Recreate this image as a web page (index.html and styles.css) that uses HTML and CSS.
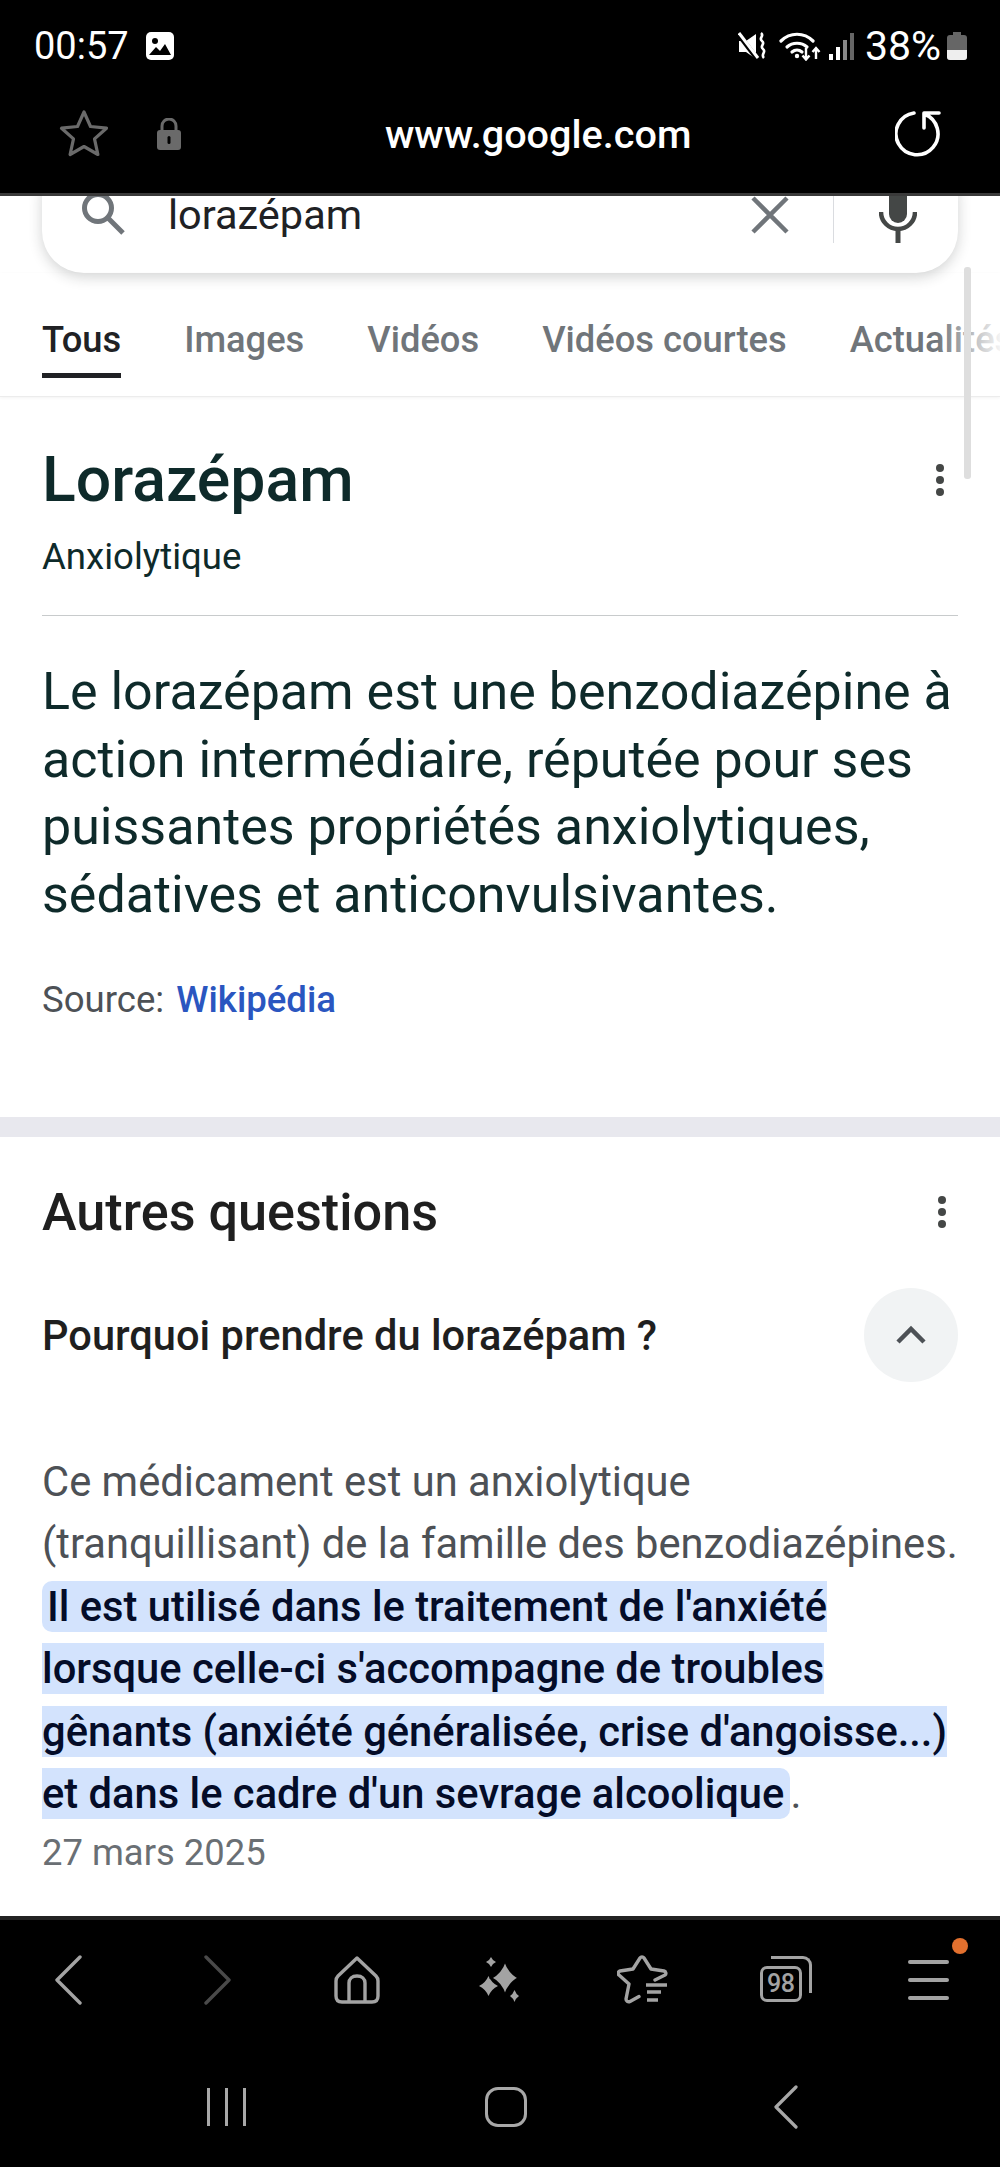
FILE: index.html
```html
<!DOCTYPE html>
<html lang="fr">
<head>
  <meta charset="UTF-8" />
  <meta name="viewport" content="width=device-width, initial-scale=1.0"/>
  <title>lorazépam - Recherche Google</title>
  <link rel="stylesheet" href="styles.css">
</head>
<body>

  <header class="top-bar">
    <div class="status-row">
      <span class="clock">00:57</span>
      <svg class="gallery-icon" width="28" height="28" viewBox="0 0 28 28">
        <rect width="28" height="28" rx="5" fill="#fff"/>
        <circle cx="9" cy="9" r="3" fill="#000"/>
        <path d="M3 23l7-8 4 4 5-7 6 11z" fill="#000"/>
      </svg>
      <div class="status-right">
        <svg width="28" height="28" viewBox="0 0 28 28">
          <path d="M1 9h7l10-7v25L8 20H1z" fill="#fff"/>
          <path d="M1 3l19 25" stroke="#000" stroke-width="5"/>
          <path d="M1 1l19 25" stroke="#fff" stroke-width="3"/>
          <path d="M23 1c4 3-3 5 1 8s-3 5 1 8-3 5 1 9" fill="none" stroke="#fff" stroke-width="2.600"/>
        </svg>
        <svg class="wifi-icon" width="50" height="30" viewBox="0 0 50 30">
          <g fill="none" stroke="#fff" stroke-width="3.200" stroke-linecap="round">
            <path d="M2 10c9-9 23-9 32 0"/>
            <path d="M8 16c5.500-5 14.500-5 20 0"/>
            <path d="M13 21c3-2.500 7-2.500 10 0"/>
          </g>
          <circle cx="18" cy="25" r="2.200" fill="#fff"/>
          <g fill="none" stroke="#fff" stroke-width="2.400">
            <path d="M27 17v11M23.500 24.500l3.500 4 3.500-4"/>
            <path d="M37 28V17M33.500 21l3.500-4 3.500 4"/>
          </g>
        </svg>
        <div class="signal">
          <i class="bar-1"></i><i class="bar-2"></i><i class="bar-3"></i><i class="bar-4"></i>
        </div>
        <span class="battery-text">38%</span>
        <div class="battery"><div class="battery-level"></div></div>
      </div>
    </div>
    <div class="url-row">
      <svg width="50" height="50" viewBox="0 0 50 50">
        <path d="M25 3l6.500 14.500 16 1.700-12 10.700 3.400 15.600L25 37.500l-13.900 8 3.400-15.600-12-10.700 16-1.700z" fill="none" stroke="#6a6a6a" stroke-width="3.200" stroke-linejoin="round"/>
      </svg>
      <svg class="lock-icon" width="24" height="32" viewBox="0 0 24 32">
        <path d="M5 14V8a7 7 0 0 1 14 0v6" fill="none" stroke="#6a6a6a" stroke-width="3"/>
        <rect y="12" width="24" height="20" rx="3" fill="#6a6a6a"/>
        <rect x="10.500" y="18" width="3" height="8" rx="1.500" fill="#000"/>
      </svg>
      <span class="url">www.google.com</span>
      <svg class="reload-icon" width="48" height="48" viewBox="0 0 48 48">
        <path d="M19 3A21 21 0 1 0 29 4M44 3H29V18" fill="none" stroke="#fff" stroke-width="3.600" stroke-linecap="round" stroke-linejoin="round"/>
      </svg>
    </div>
  </header>

  <main class="content">
    <div class="search-box">
      <svg width="46" height="46" viewBox="0 0 46 46">
        <circle cx="18" cy="16" r="13.500" fill="none" stroke="#70757a" stroke-width="5"/>
        <path d="M28 26l15 15" stroke="#70757a" stroke-width="5"/>
      </svg>
      <span class="search-text">lorazépam</span>
      <svg class="clear-icon" width="38" height="38" viewBox="0 0 38 38">
        <path d="M2 2l34 34M36 2L2 36" stroke="#70757a" stroke-width="4.500"/>
      </svg>
      <div class="search-divider"></div>
      <svg class="mic-icon" width="38" height="60" viewBox="0 0 38 60">
        <rect x="10" y="0" width="18" height="37" rx="9" fill="#444746"/>
        <path d="M2 26a17 17 0 0 0 34 0" fill="none" stroke="#444746" stroke-width="4.500"/>
        <path d="M19 42v15" stroke="#444746" stroke-width="5"/>
      </svg>
    </div>

    <nav class="tabs">
      <a class="tab active">Tous</a>
      <a class="tab">Images</a>
      <a class="tab">Vidéos</a>
      <a class="tab">Vidéos courtes</a>
      <a class="tab">Actualités</a>
    </nav>
    <div class="tabs-fade"></div>
    <div class="scrollbar"></div>

    <section class="panel">
      <div class="panel-head">
        <h1>Lorazépam</h1>
        <div class="dots"><i></i><i></i><i></i></div>
      </div>
      <div class="subtitle">Anxiolytique</div>
      <p class="description">Le lorazépam est une benzodiazépine à action intermédiaire, réputée pour ses puissantes propriétés anxiolytiques, sédatives et anticonvulsivantes.</p>
      <div class="source">Source: <a>Wikipédia</a></div>
    </section>

    <section class="questions">
      <div class="questions-head">
        <h2>Autres questions</h2>
        <div class="dots"><i></i><i></i><i></i></div>
      </div>
      <div class="question">
        <span>Pourquoi prendre du lorazépam ?</span>
        <div class="collapse">
          <svg width="32" height="20" viewBox="0 0 32 20">
            <path d="M3 17L16 4l13 13" fill="none" stroke="#4d5156" stroke-width="4.500"/>
          </svg>
        </div>
      </div>
      <p class="answer">Ce médicament est un anxiolytique (tranquillisant) de la famille des benzodiazépines. <mark>Il est utilisé dans le traitement de l'anxiété lorsque celle-ci s'accompagne de troubles gênants (anxiété généralisée, crise d'angoisse...) et dans le cadre d'un sevrage alcoolique</mark>.</p>
      <div class="answer-date">27 mars 2025</div>
    </section>
  </main>

  <footer class="bottom-bar">
    <div class="toolbar">
      <svg class="nav-back" width="30" height="50" viewBox="0 0 30 50">
        <path d="M27 2L4 25l23 23" fill="none" stroke="#a3a3a3" stroke-width="3.400" stroke-linecap="round" stroke-linejoin="round"/>
      </svg>
      <svg class="nav-forward" width="30" height="50" viewBox="0 0 30 50">
        <path d="M3 2l23 23L3 48" fill="none" stroke="#4a4a4a" stroke-width="3.400" stroke-linecap="round" stroke-linejoin="round"/>
      </svg>
      <svg width="46" height="48" viewBox="0 0 46 48">
        <path d="M23 2L4 20c-1.500 1.500-2 3-2 5v15c0 3.500 2 6 6 6h30c4 0 6-2.500 6-6V25c0-2-.5-3.500-2-5z" fill="none" stroke="#a3a3a3" stroke-width="3.400" stroke-linejoin="round"/>
        <path d="M15 46V27c0-4 3-7 8-7s8 3 8 7v19" fill="none" stroke="#a3a3a3" stroke-width="3.400"/>
      </svg>
      <svg width="42" height="48" viewBox="0 0 42 48">
        <path d="M9.500 20Q12.500 27 19 30 12.500 33 9.500 40 6.500 33 0 30 6.500 27 9.500 20z" fill="#a3a3a3"/>
        <path d="M26 5Q30 17 40 22 30 27 26 39 22 27 12 22 22 17 26 5z" fill="#a3a3a3" stroke="#000" stroke-width="2"/>
        <path d="M12 1Q13.500 4.500 17 6 13.500 7.500 12 11 10.500 7.500 7 6 10.500 4.500 12 1z" fill="#a3a3a3"/>
        <path d="M35.500 34Q37 38 40 40 37 42 35.500 46 34 42 31 40 34 38 35.500 34z" fill="#a3a3a3"/>
      </svg>
      <svg width="52" height="50" viewBox="0 0 52 50">
        <path d="M38 25l10-5c1.500-1 1-3.500-1-4l-13-2L27 3c-1-1.500-3-1.500-4 0l-7 11-13 2c-2 .5-2.500 3-1 4l10 9-3 15c0 2 2 3.500 4 2.500l9-5" fill="none" stroke="#a3a3a3" stroke-width="3.400" stroke-linecap="round" stroke-linejoin="round"/>
        <path d="M29 30h21M30 37h14M30 45h11" stroke="#a3a3a3" stroke-width="3.600"/>
      </svg>
      <div class="tabs-count">
        <span>98</span>
      </div>
      <div class="menu-button">
        <i></i><i></i><i></i>
        <div class="menu-badge"></div>
      </div>
    </div>
    <div class="system-nav">
      <div class="recents"><i></i><i></i><i></i></div>
      <div class="home-button"></div>
      <svg width="26" height="44" viewBox="0 0 26 44">
        <path d="M23 2L3 22l20 20" fill="none" stroke="#a8a8a8" stroke-width="3.200" stroke-linecap="round" stroke-linejoin="round"/>
      </svg>
    </div>
  </footer>

</body>
</html>
```

FILE: styles.css
```css
* {
  box-sizing: border-box;
  padding: 0;
  margin: 0;
}

html, body {
  height: 100%;
}

body {
  font-family: Roboto, 'Liberation Sans', sans-serif;
  display: flex;
  flex-direction: column;
  height: 2167px;
  overflow: hidden;
  background: #000;
}

/* browser chrome, top */
.top-bar {
  height: 196px;
  background: #000;
  border-bottom: 3px solid #3a3a3a;
  color: #fff;
  flex-shrink: 0;
}

.status-row {
  display: flex;
  align-items: center;
  height: 92px;
  padding: 0 33px 0 34px;
}

.clock {
  font-size: 38px;
}

.gallery-icon {
  margin-left: 17px;
}

.status-right {
  display: flex;
  align-items: center;
  margin-left: auto;
}

.wifi-icon {
  margin-left: 13px;
}

.signal {
  display: flex;
  align-items: flex-end;
  gap: 3.500px;
  height: 28px;
}

.signal i {
  display: block;
  width: 3.500px;
  background: #fff;
}

.signal .bar-1 { height: 6px; }
.signal .bar-2 { height: 13px; }
.signal .bar-3 { height: 20px; background: #888; }
.signal .bar-4 { height: 27px; background: #666; }

.battery-text {
  font-size: 41px;
  margin-left: 11px;
}

.battery {
  position: relative;
  width: 20px;
  height: 25px;
  margin: 3px 0 0 6px;
  background: #666;
  border-radius: 3px;
  overflow: visible;
}

.battery::before {
  content: "";
  position: absolute;
  top: -3px;
  left: 6px;
  width: 8px;
  height: 4px;
  background: #666;
}

.battery-level {
  position: absolute;
  left: 0;
  right: 0;
  bottom: 0;
  height: 10px;
  background: #eee;
  border-radius: 0 0 3px 3px;
}

.url-row {
  display: flex;
  align-items: center;
  height: 84px;
  padding: 0 57px 0 59px;
}

.lock-icon {
  margin-left: 48px;
}

.url {
  margin-left: 204px;
  font-size: 39.6px;
  font-weight: 500;
}

.reload-icon {
  margin-left: auto;
}

/* page */
.content {
  position: relative;
  flex: 1;
  overflow: hidden;
  background: #fff;
}

.search-box {
  display: flex;
  align-items: center;
  height: 117px;
  margin: -40px 42px 0;
  padding: 0 41px 0 38px;
  background: #fff;
  border-radius: 42px;
  box-shadow: 0 4px 14px rgba(32, 33, 36, 0.2);
}

.search-text {
  margin-left: 42px;
  font-size: 41.5px;
  line-height: 40px;
  color: #202124;
}

.clear-icon {
  margin-left: auto;
}

.search-divider {
  width: 1px;
  height: 76px;
  margin: -20px 0 0 44px;
  background: #dadce0;
}

.mic-icon {
  margin: 2px 0 0 45px;
}

.tabs {
  display: flex;
  gap: 63px;
  height: 124px;
  padding: 44px 0 0 42px;
  border-bottom: 1px solid #ececec;
  box-shadow: 0 1px 3px rgba(0, 0, 0, 0.05);
  white-space: nowrap;
  overflow: hidden;
}

.tab {
  height: 61px;
  font-size: 36.3px;
  font-weight: 500;
  line-height: 46px;
  color: #70757a;
}

.tab.active {
  color: #202124;
  border-bottom: 5px solid #202124;
}

.tabs-fade {
  position: absolute;
  top: 100px;
  right: 0;
  width: 64px;
  height: 80px;
  background: linear-gradient(to right, rgba(255, 255, 255, 0), rgba(255, 255, 255, 0.92));
}

.scrollbar {
  position: absolute;
  top: 71px;
  left: 964px;
  width: 7px;
  height: 212px;
  border-radius: 3px;
  background: #dedede;
}

.panel {
  padding: 43px 42px 0;
  height: 740px;
  border-bottom: 20px solid #e8e8ee;
}

.panel-head,
.questions-head,
.question {
  display: flex;
  align-items: center;
  justify-content: space-between;
}

h1 {
  font-size: 62.5px;
  font-weight: 500;
  line-height: 80px;
  color: #0e2a2a;
}

.dots {
  display: flex;
  flex-direction: column;
  gap: 4px;
  margin-right: 14px;
}

.dots i {
  display: block;
  width: 8px;
  height: 8px;
  border-radius: 50%;
  background: #444746;
}

.subtitle {
  margin-top: 17px;
  padding-bottom: 38px;
  font-size: 36.6px;
  line-height: 40px;
  color: #0e2a2a;
  border-bottom: 1px solid #c8cbcc;
}

.description {
  margin-top: 42px;
  font-size: 52px;
  line-height: 67.7px;
  color: #0e2a2a;
}

.source {
  margin-top: 51px;
  font-size: 36.6px;
  line-height: 40px;
  color: #4d5156;
}

.source a {
  margin-left: 3px;
  font-weight: 500;
  color: #2a56c0;
}

.questions {
  padding: 0 42px;
}

.questions-head {
  height: 150px;
}

.questions-head .dots {
  margin-right: 12px;
}

h2 {
  font-size: 52.2px;
  font-weight: 500;
  color: #1f1f1f;
}

.question {
  height: 96px;
  font-size: 41.6px;
  font-weight: 500;
  color: #1f1f1f;
}

.collapse {
  display: flex;
  align-items: center;
  justify-content: center;
  width: 94px;
  height: 94px;
  border-radius: 50%;
  background: #f1f3f4;
}

.answer {
  margin-top: 68px;
  font-size: 41.7px;
  line-height: 62.4px;
  color: #4d5156;
}

mark {
  padding: 1px 6px 1px 5px;
  font-weight: 500;
  color: #040c28;
  background: #d3e3fd;
  border-radius: 10px;
}

.answer-date {
  margin-top: 6px;
  font-size: 36.4px;
  line-height: 44px;
  color: #6a6f74;
}

/* browser chrome, bottom */
.bottom-bar {
  height: 251px;
  flex-shrink: 0;
  background: #000;
  border-top: 4px solid #222;
}

.toolbar {
  display: grid;
  grid-template-columns: repeat(7, 1fr);
  justify-items: center;
  align-items: center;
  height: 120px;
}

.nav-back {
  margin-right: 6px;
}

.nav-forward {
  margin-left: 8px;
}

.tabs-count {
  position: relative;
  width: 42px;
  height: 36px;
  margin: 7px 10px 0 0;
  border: 3.400px solid #a3a3a3;
  border-radius: 7px;
  font-size: 25px;
  font-weight: 500;
  line-height: 29px;
  text-align: center;
  color: #a3a3a3;
  letter-spacing: -0.5px;
}

.tabs-count::after {
  content: "";
  position: absolute;
  top: -13px;
  right: -13px;
  width: 38px;
  height: 34px;
  border: solid #a3a3a3;
  border-width: 3.400px 3.400px 0 0;
  border-radius: 0 9px 0 0;
}

.menu-button {
  position: relative;
  display: flex;
  flex-direction: column;
  gap: 14px;
  width: 41px;
}

.menu-button i {
  display: block;
  height: 4px;
  border-radius: 2px;
  background: #a3a3a3;
}

.menu-badge {
  position: absolute;
  top: -22px;
  right: -19px;
  width: 16px;
  height: 16px;
  border-radius: 50%;
  background: #e2702e;
}

.system-nav {
  display: grid;
  grid-template-columns: repeat(3, 280px);
  justify-items: center;
  align-items: center;
  height: 127px;
  padding: 6px 0 0 86px;
}

.recents {
  display: flex;
  gap: 15px;
}

.recents i {
  display: block;
  width: 3px;
  height: 38px;
  background: #a8a8a8;
}

.home-button {
  width: 42px;
  height: 40px;
  border: 3px solid #a8a8a8;
  border-radius: 13px;
}
```
